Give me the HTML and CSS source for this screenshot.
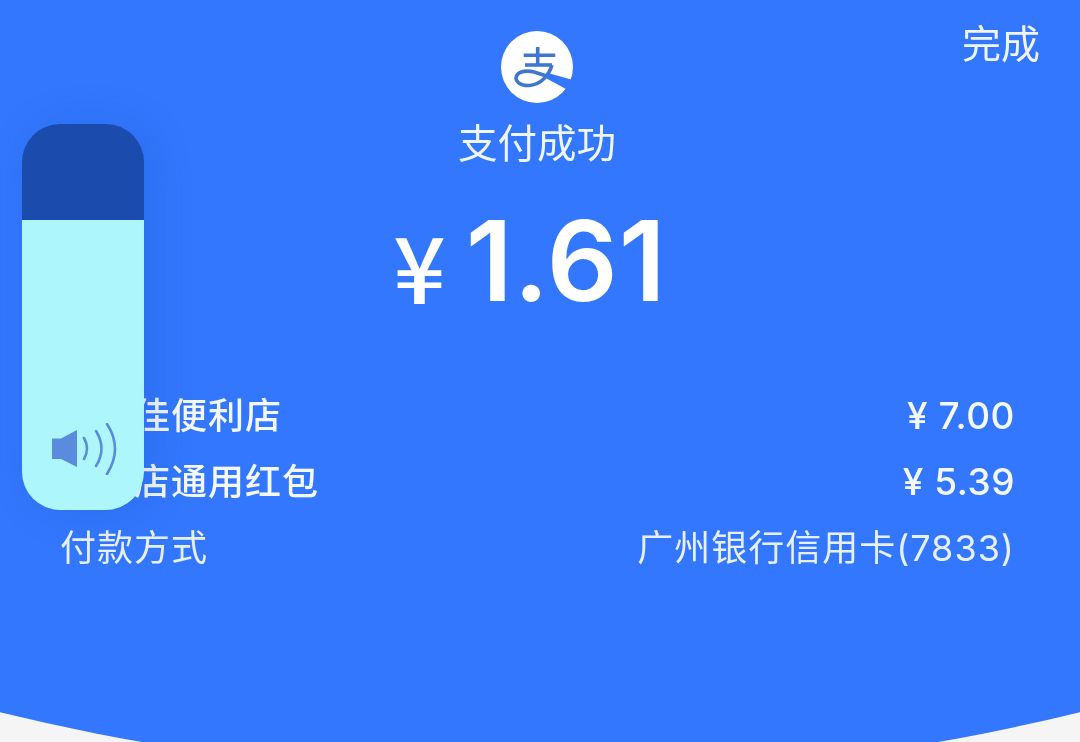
FILE: index.html
```html
<!DOCTYPE html>
<html lang="zh-CN">
<head>
<meta charset="utf-8">
<title>支付成功</title>
<link rel="stylesheet" href="styles.css">
</head>
<body>
<main class="page">
  <header class="top">
    <div class="brand">
      <svg class="logo" viewBox="0 0 72 72" width="72" height="72" aria-hidden="true">
        <circle cx="36" cy="36" r="36" fill="#fff"/>
        <g fill="none" stroke="#3f76cf" stroke-width="3.600" stroke-linecap="butt">
          <path d="M22.700 24.300 H54.300"/>
          <path d="M36.700 16 V34"/>
          <path d="M24 34 H51"/>
          <path d="M51 34 C48 44 40 54 28 54.500 C19 55 13.500 50 15.500 45 C18 39.500 27 39.500 33 41 C38 42.500 43 44 48 46"/>
        </g>
        <path d="M47 42 L74 49.500 L65 58 L45.500 47.500 Z" fill="#3277fd"/>
      </svg>
      <h1 class="title">支付成功</h1>
    </div>
    <a class="done">完成</a>
  </header>

  <div class="amount"><span class="yen">¥</span><span class="num">1.61</span></div>

  <section class="rows">
    <div class="row strong"><span>美宜佳便利店</span><span class="val">¥ 7.00</span></div>
    <div class="row strong"><span>便利店通用红包</span><span class="val">¥ 5.39</span></div>
    <div class="row"><span>付款方式</span><span class="val">广州银行信用卡(7833)</span></div>
  </section>

  <aside class="volume">
    <div class="vol-empty"></div>
    <div class="vol-fill">
      <svg class="speaker" viewBox="0 0 70 52" width="70" height="52" aria-hidden="true">
        <path d="M1 15.500 H10 L26 7 V44 L10 36 H1 Z" fill="#5b8bdc"/>
        <g fill="none" stroke="#5b8bdc" stroke-width="2.600" stroke-linecap="round">
          <path d="M33 15 Q39 25.500 33 36"/>
          <path d="M45 8 Q56 25.500 45 43"/>
          <path d="M56 1 Q72 25.500 56 51"/>
        </g>
      </svg>
    </div>
  </aside>
</main>
</body>
</html>
```

FILE: styles.css
```css
* { box-sizing: border-box; }

html, body {
  margin: 0;
  height: 100%;
  background: #f5f5f5;
  overflow: hidden;
}

.page {
  position: relative;
  width: 1080px;
  height: 742px;
  display: flex;
  flex-direction: column;
  background: #3277fd;
  color: #fff;
  font-family: Inter, "Noto Sans CJK SC", "Liberation Sans", sans-serif;
  clip-path: circle(2283px at 540px -1506px);
}

.top {
  display: grid;
  grid-template-columns: 1fr auto 1fr;
  padding: 31px 40px 0;
  filter: blur(0.4px);
}

.brand {
  grid-column: 2;
  display: flex;
  flex-direction: column;
  align-items: center;
  margin-left: -6px;
}

.logo { display: block; }

.title {
  margin: 0;
  padding-top: 6px;
  font-size: 39.500px;
  line-height: 64px;
  font-weight: 400;
  font-family: "Noto Sans CJK SC", sans-serif;
  color: #f0f6ff;
}

.done {
  grid-column: 3;
  justify-self: end;
  margin-top: -14px;
  font-size: 39px;
  line-height: 48px;
  font-family: "Noto Sans CJK SC", sans-serif;
  color: #f0f6ff;
}

.amount {
  display: flex;
  justify-content: center;
  align-items: baseline;
  gap: 20px;
  margin-top: 12px;
  height: 169px;
  margin-right: 20px;
  filter: blur(0.4px);
}

.yen {
  font-size: 92px;
  line-height: 152px;
  font-weight: 500;
  font-family: "Noto Sans CJK SC", sans-serif;
  transform: translateY(3px);
}

.num {
  font-size: 111px;
  line-height: 152px;
  font-weight: 600;
  letter-spacing: 1px;
}

.rows {
  display: flex;
  flex-direction: column;
  gap: 14px;
  padding: 0 65px 0 60px;
  margin-top: 36px;
  filter: blur(0.4px);
}

.row {
  display: flex;
  justify-content: space-between;
  height: 52px;
  font-size: 36px;
  line-height: 52px;
  letter-spacing: 1px;
  color: #e6f0ff;
  font-weight: 400;
}

.row.strong {
  font-weight: 500;
  color: #f4f8ff;
}

.row.strong .val {
  font-size: 37px;
  letter-spacing: 0.500px;
}

.volume {
  position: absolute;
  left: 22px;
  top: 124px;
  width: 122px;
  height: 386px;
  border-radius: 38px;
  overflow: hidden;
  display: flex;
  flex-direction: column;
  box-shadow: 8px 0 40px rgba(24, 70, 170, 0.18);
}

.vol-empty {
  height: 96px;
  background: #1b4cad;
}

.vol-fill {
  flex: 1;
  background: #adf6fb;
  display: flex;
  align-items: flex-end;
  padding: 0 0 35px 29px;
}

.speaker { display: block; }
```
